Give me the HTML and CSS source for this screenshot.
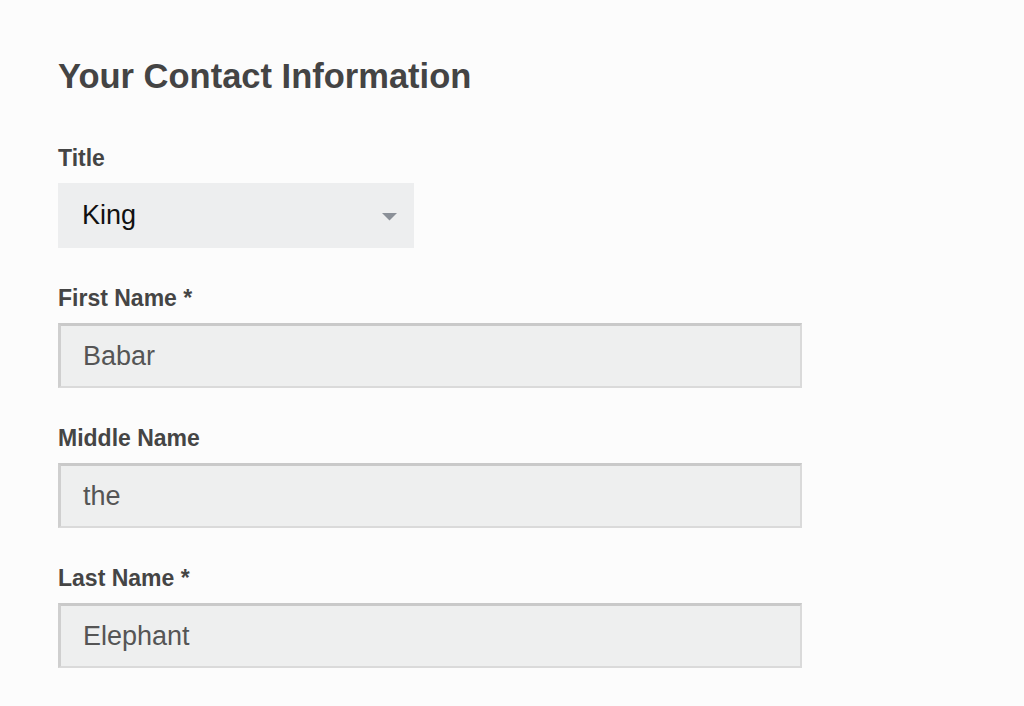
FILE: index.html
```html
<!DOCTYPE html>
<html>
<head>
<meta charset="utf-8">
<link rel="stylesheet" href="styles.css">
</head>
<body>
<div class="page">
  <h1 class="heading">Your Contact Information</h1>
  <div class="field">
    <div class="label">Title</div>
    <div class="select">
      <span class="select-value">King</span>
      <svg class="caret" width="15" height="8" viewBox="0 0 15 8"><path d="M0 0 H15 L7.5 7.5 Z" fill="#8b9098"/></svg>
    </div>
  </div>
  <div class="field">
    <div class="label">First Name *</div>
    <div class="input">Babar</div>
  </div>
  <div class="field">
    <div class="label">Middle Name</div>
    <div class="input">the</div>
  </div>
  <div class="field">
    <div class="label">Last Name *</div>
    <div class="input">Elephant</div>
  </div>
</div>
</body>
</html>
```
FILE: styles.css
```css
html, body {
  margin: 0;
  padding: 0;
  background: #fcfcfc;
}
.page {
  padding: 56px 0 0 58px;
  font-family: "Liberation Sans", Arial, sans-serif;
  color: #444;
}
.heading {
  margin: 0 0 49px 0;
  font-size: 34.5px;
  line-height: 40px;
  font-weight: bold;
  color: #444;
}
.field {
  margin-bottom: 37px;
}
.label {
  font-size: 23px;
  line-height: 26px;
  font-weight: bold;
  color: #454545;
  margin-bottom: 12px;
}
.select {
  width: 356px;
  height: 65px;
  background: #edeeef;
  display: flex;
  align-items: center;
  justify-content: space-between;
  padding: 0 17px 0 24px;
  box-sizing: border-box;
}
.select-value {
  font-size: 27px;
  color: #111;
}
.caret {
  margin-top: 2px;
}
.input {
  width: 744px;
  height: 65px;
  box-sizing: border-box;
  background: #eeefef;
  border-top: 3px solid #c9c9c9;
  border-left: 3px solid #cfcfcf;
  border-right: 2px solid #dadada;
  border-bottom: 2px solid #dadada;
  padding: 0 0 0 22px;
  display: flex;
  align-items: center;
  font-size: 27px;
  color: #555;
}
```
